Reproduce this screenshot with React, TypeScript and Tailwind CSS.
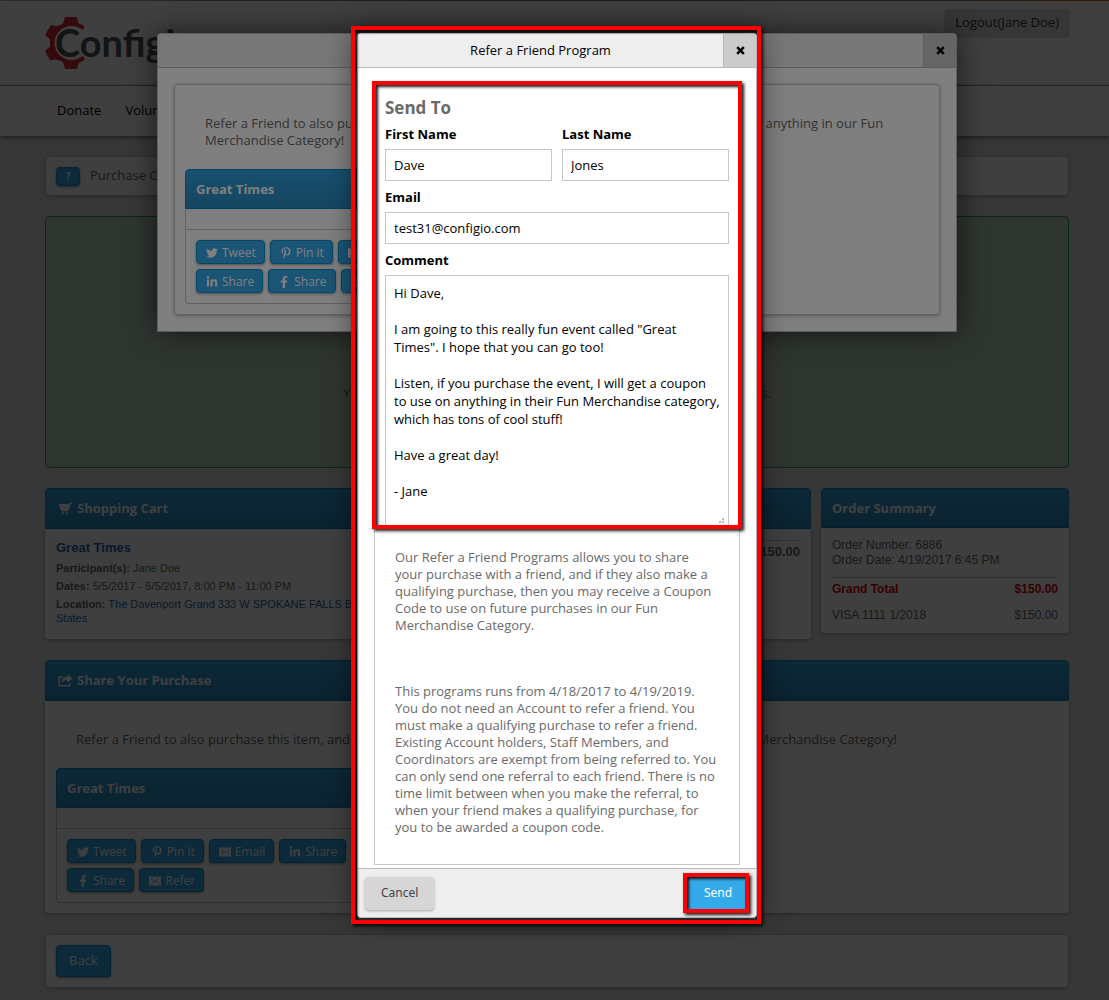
import React, { useState } from 'react';
import { FaFacebookF, FaLinkedinIn, FaPinterestP, FaTwitter } from 'react-icons/fa';

const COMMENT = `Hi Dave,

I am going to this really fun event called "Great Times". I hope that you can go too!

Listen, if you purchase the event, I will get a coupon to use on anything in their Fun Merchandise category, which has tons of cool stuff!

Have a great day!

- Jane`;

const REFER_TEXT =
  'Refer a Friend to also purchase this item, and then you will receive a Coupon Code to use on anything in our Fun Merchandise Category!';

const EnvelopeIcon = () => (
  <svg width="12" height="10" viewBox="0 0 12 10" aria-hidden="true">
    <rect x="0" y="0.5" width="12" height="9" fill="currentColor" />
    <path d="M2 2.5 L6 6 L10 2.5 M2 7.7 L4.4 5.2 M10 7.7 L7.6 5.2" fill="none" stroke="#34aaea" strokeWidth="1" />
  </svg>
);

const CartIcon = () => (
  <svg width="15" height="13" viewBox="0 0 15 13" fill="currentColor" aria-hidden="true">
    <path d="M0.5 2 H10.6 L11.8 0.8 H14.4 V2 H12.6 L10.2 9.2 H3.4 Z" />
    <circle cx="5" cy="11.2" r="1" />
    <circle cx="8.8" cy="11.2" r="1" />
  </svg>
);

const ShareIcon = () => (
  <svg width="15" height="13" viewBox="0 0 15 13" aria-hidden="true">
    <path d="M5.2 3.2 H1 V11.8 H12 V9" fill="none" stroke="currentColor" strokeWidth="1.5" />
    <path d="M9.4 0.6 L14.8 4.6 L9.4 8.6 V6.4 C6.6 6.2 4.8 7 3.4 9.2 C3.6 5.6 5.6 3 9.4 2.8 Z" fill="currentColor" />
  </svg>
);

const CloseIcon = () => (
  <svg width="9" height="9" viewBox="0 0 9 9" aria-hidden="true">
    <path d="M1.2 1.2 L7.8 7.8 M7.8 1.2 L1.2 7.8" stroke="black" strokeWidth="2.6" />
  </svg>
);

const Logo = () => (
  <a href="#home" className="relative block h-[52px] w-[170px]" aria-label="Configio">
    <svg width="42" height="52" viewBox="0 0 42 52" className="absolute left-0 top-0" aria-hidden="true">
      <path
        d="M20 0 H32 L33.5 6.5 L39.5 9 L37 15 L30 22 V30 L37 38 L40 42 L38 44 L33.5 46 L32 52 H20 L18 45 C15 43.5 13 43 11 42.5 L5 43.5 L0 34 L5 29.5 V22.5 L0 18 L6 8 L12 9.5 C14 8.5 16 7.5 18 6.5 Z"
        fill="#d42a35"
      />
      <circle cx="26.5" cy="26" r="17" fill="white" />
      <path d="M26 26 L42 8 V44 Z" fill="white" />
    </svg>
    <span className="absolute left-[10px] top-0 font-['Lato'] text-[38px] font-bold leading-[50px] text-[#505050]">
      Configio
    </span>
  </a>
);

const blueBar = 'border border-[#0884c2] bg-gradient-to-b from-[#32a2de] to-[#2a8cc2] font-bold text-white';
const blueButton = 'rounded border border-[#0890d0] bg-[#34aaea] text-white shadow-[0_1px_3px_rgba(0,0,0,0.4)]';
const panel = 'mx-px rounded bg-white shadow-[0_1px_4px_rgba(0,0,0,0.3)]';

const shareLinks = [
  { label: 'Tweet', icon: <FaTwitter size={12} /> },
  { label: 'Pin it', icon: <FaPinterestP size={12} /> },
  { label: 'Email', icon: <EnvelopeIcon /> },
  { label: 'Share', icon: <FaLinkedinIn size={12} /> },
  { label: 'Share', icon: <FaFacebookF size={12} /> },
  { label: 'Refer', icon: <EnvelopeIcon /> },
];

const ShareBox = () => (
  <div className="w-1/3">
    <h3 className={`flex h-10 items-center rounded-t px-[10px] pt-px ${blueBar}`}>Great Times</h3>
    <div className="rounded-b border border-t-0 border-[#c4c4c4]">
      <div className="h-[21px] border-b border-[#c4c4c4]" />
      <div className="flex flex-wrap gap-[5px] p-[10px]">
        {shareLinks.map(({ label, icon }, i) => (
          <button key={i} type="button" className={`flex h-6 items-center gap-1 pl-[9px] pr-2 pt-[2px] text-[12px] ${blueButton}`}>
            {icon}
            {label}
          </button>
        ))}
      </div>
    </div>
  </div>
);

const DialogHeader = ({ title }: { title?: string }) => (
  <div className="flex h-[34px] border-b border-[#b8b8b8] bg-[#eeeeee]">
    <h2 className="flex flex-1 items-center justify-center">{title}</h2>
    <button type="button" aria-label="Close" className="flex w-[33px] items-center justify-center border-l border-[#b8b8b8] bg-[#cbcbcb]">
      <CloseIcon />
    </button>
  </div>
);

const field = 'block w-full border border-[#c6c6c6] bg-white px-2 text-black outline-none';
const callout =
  'pointer-events-none absolute border-[4px] border-[#ff0000] shadow-[2px_2px_3px_rgba(0,0,0,0.9),inset_2px_2px_3px_rgba(0,0,0,0.9)]';

const OrderPage = () => (
  <div className="min-h-screen bg-[#dcdcdc] pb-3">
    <div className="h-px bg-gradient-to-r from-[#a8b4b0] via-[#5a6a88] to-[#b87838]" />
    <header className="flex h-[85px] justify-between border-b border-[#a8a8a8] bg-white pl-[45px] pr-10">
      <div className="pt-4">
        <Logo />
      </div>
      <div className="pt-2">
        <button type="button" className="h-[27px] rounded bg-[#d8d8d8] px-[10px] text-[#333] shadow-[0_1px_3px_rgba(0,0,0,0.3)]">
          Logout(Jane Doe)
        </button>
      </div>
    </header>
    <nav className="flex h-[50px] items-center gap-6 bg-white pl-[57px] text-black shadow-[0_1px_5px_rgba(0,0,0,0.6)]">
      <a href="#donate">Donate</a>
      <a href="#volunteer">Volunteer</a>
    </nav>

    <main className="pl-[45px] pr-10 pt-[21px]">
      <div className={`flex h-[38px] items-center gap-[10px] px-[10px] ${panel}`}>
        <button type="button" className={`h-[19px] w-6 text-[10px] font-bold leading-4 ${blueButton}`}>?</button>
        <span>Purchase Complete</span>
      </div>

      <div className="mt-[21px] flex h-[252px] items-center justify-center rounded border border-[#20a04c] bg-[#bcd6c2] pt-[104px] text-[#4a7a52]">
        You will receive an email confirmation shortly about your order details.
      </div>

      <div className="mt-5 flex items-start gap-[10px] font-['Liberation_Sans',sans-serif]">
        <section className="flex-1">
          <h2 className={`flex h-[41px] items-center gap-1 rounded-t px-3 font-['Open_Sans',sans-serif] ${blueBar}`}>
            <CartIcon />
            Shopping Cart
          </h2>
          <div className="flex h-[110px] rounded-b bg-white px-[11px] pt-[11px] shadow-[0_1px_4px_rgba(0,0,0,0.3)]">
            <div className="w-[560px] text-[11px] leading-[14px] text-[#666]">
              <a href="#event" className="block text-[13px] font-bold leading-4 text-[#1a66b0]">Great Times</a>
              <p className="mt-[5px]"><b>Participant(s):</b> Jane Doe</p>
              <p className="mt-1"><b>Dates:</b> 5/5/2017 - 5/5/2017, 8:00 PM - 11:00 PM</p>
              <p className="mt-1">
                <b>Location:</b>{' '}
                <a href="#map" className="text-[#1a66b0]">
                  The Davenport Grand 333 W SPOKANE FALLS BLVD, Spokane, WA 99201 United
                  <br />
                  States
                </a>
              </p>
            </div>
            <div className="flex-1">
              <div className="border-t border-[#c4c4c4] pt-[3px] text-right font-bold leading-[15px] text-[#666]">$150.00</div>
            </div>
          </div>
        </section>

        <section className="w-[248px]">
          <h2 className={`flex h-10 items-center rounded-t px-[10px] pt-px font-['Open_Sans',sans-serif] ${blueBar}`}>Order Summary</h2>
          <div className="rounded-b bg-white px-[11px] pb-[10px] pt-[10px] text-[12px] leading-[15px] shadow-[0_1px_4px_rgba(0,0,0,0.3)]">
            <p>Order Number: 6886</p>
            <p>Order Date: 4/19/2017 6:45 PM</p>
            <div className="mt-[9px] flex justify-between border-t border-[#c4c4c4] pt-1 font-bold text-[#dd0000]">
              <span>Grand Total</span>
              <span>$150.00</span>
            </div>
            <div className="mt-[11px] flex justify-between">
              <span>VISA 1111 1/2018</span>
              <span>$150.00</span>
            </div>
          </div>
        </section>
      </div>

      <section className="mt-[21px]">
        <h2 className={`flex h-[41px] items-center gap-1 rounded-t px-3 ${blueBar}`}>
          <ShareIcon />
          Share Your Purchase
        </h2>
        <div className="rounded-b bg-white px-[11px] py-[10px] shadow-[0_1px_4px_rgba(0,0,0,0.3)]">
          <p className="px-5 py-5 leading-[17px]">{REFER_TEXT}</p>
          <ShareBox />
        </div>
      </section>

      <div className={`mt-[22px] p-[10px] ${panel}`}>
        <button type="button" className={`h-8 px-3 ${blueButton}`}>Back</button>
      </div>
    </main>
  </div>
);

const ShareDialog = () => (
  <div className="absolute inset-0 bg-black/50 pl-[45px] pr-10 pt-[33px]">
    <div role="dialog" className="mx-auto w-full max-w-[800px] overflow-hidden rounded-t border border-[#bbb] bg-white shadow-[0_0_30px_rgba(0,0,0,0.6)]">
      <DialogHeader />
      <div className="p-4">
        <div className="rounded border border-[#c4c4c4] p-[10px] shadow-[0_1px_4px_rgba(0,0,0,0.3)]">
          <p className="px-5 py-5 leading-[17px]">{REFER_TEXT}</p>
          <ShareBox />
        </div>
      </div>
    </div>
  </div>
);

const ReferDialog = () => {
  const [firstName, setFirstName] = useState('Dave');
  const [lastName, setLastName] = useState('Jones');
  const [email, setEmail] = useState('test31@configio.com');
  const [comment, setComment] = useState(COMMENT);

  return (
    <div className="absolute inset-0 bg-black/50 pl-[45px] pr-10 pt-[33px]">
      <div role="dialog" className="relative mx-auto w-full max-w-[400px] rounded border border-[#bbb] bg-white text-black shadow-[0_0_30px_rgba(0,0,0,0.6)]">
        <DialogHeader title="Refer a Friend Program" />
        <form id="refer-form" className="px-4 pb-[3px] pt-4" onSubmit={(e) => e.preventDefault()}>
          <div className="relative border border-[#c6c6c6] px-[10px] pb-7">
            <h3 className="pt-[11px] text-[17px] font-bold leading-6 text-[#6a6a6a]">Send To</h3>
            <div className="mt-[5px] grid grid-cols-2 gap-[10px]">
              <div>
                <label htmlFor="first" className="mb-[6px] block font-bold leading-[18px]">First Name</label>
                <input id="first" className={`h-8 ${field}`} value={firstName} onChange={(e) => setFirstName(e.target.value)} />
              </div>
              <div>
                <label htmlFor="last" className="mb-[6px] block font-bold leading-[18px]">Last Name</label>
                <input id="last" className={`h-8 ${field}`} value={lastName} onChange={(e) => setLastName(e.target.value)} />
              </div>
            </div>
            <label htmlFor="email" className="mb-[6px] mt-[7px] block font-bold leading-[18px]">Email</label>
            <input id="email" type="email" className={`h-8 ${field}`} value={email} onChange={(e) => setEmail(e.target.value)} />
            <label htmlFor="comment" className="mb-[6px] mt-[7px] block font-bold leading-[18px]">Comment</label>
            <div className="relative">
              <textarea
                id="comment"
                className={`h-[253px] resize-none overflow-hidden py-2 leading-[18px] ${field}`}
                value={comment}
                onChange={(e) => setComment(e.target.value)}
              />
              {/* resize grip */}
              <svg width="6" height="6" viewBox="0 0 6 6" fill="#bbb" className="absolute bottom-1 right-1" aria-hidden="true">
                <rect x="3" y="0" width="2" height="2" />
                <rect x="0" y="3" width="2" height="2" />
                <rect x="3" y="3" width="2" height="2" />
              </svg>
            </div>
            <p className="mt-[21px] px-[10px] leading-[17px] text-[#6a6a6a]">
              Our Refer a Friend Programs allows you to share your purchase with a friend, and if they also make a qualifying
              purchase, then you may receive a Coupon Code to use on future purchases in our Fun Merchandise Category.
            </p>
            <p className="mt-[49px] px-[10px] leading-[17px] text-[#6a6a6a]">
              This programs runs from 4/18/2017 to 4/19/2019. You do not need an Account to refer a friend. You must make a
              qualifying purchase to refer a friend. Existing Account holders, Staff Members, and Coordinators are exempt from
              being referred to. You can only send one referral to each friend. There is no time limit between when you make
              the referral, to when your friend makes a qualifying purchase, for you to be awarded a coupon code.
            </p>
            <div className={`-left-[3px] -right-[3px] -top-1 h-[448px] ${callout}`} />
          </div>
        </form>
        <div className="flex h-[49px] items-center justify-between rounded-b border-t border-[#b8b8b8] bg-[#eeeeee] px-[7px] font-['Noto_Sans',sans-serif] text-[12px]">
          <button type="button" className="h-[33px] rounded bg-[#d6d6d6] px-4 text-[#444] shadow-[0_1px_3px_rgba(0,0,0,0.3)]">Cancel</button>
          <div className="relative">
            <button type="submit" form="refer-form" className="block h-8 w-[62px] bg-[#34aaea] text-white">Send</button>
            <div className={`-bottom-1 -left-1 -top-1 right-0 ${callout}`} />
          </div>
        </div>
        <div className={`-bottom-[7px] -left-[7px] -right-[5px] -top-2 ${callout}`} />
      </div>
    </div>
  );
};

export default function App() {
  return (
    <div className="relative overflow-hidden font-['Open_Sans',sans-serif] text-[13px] text-[#666]">
      <OrderPage />
      <ShareDialog />
      <ReferDialog />
    </div>
  );
}
